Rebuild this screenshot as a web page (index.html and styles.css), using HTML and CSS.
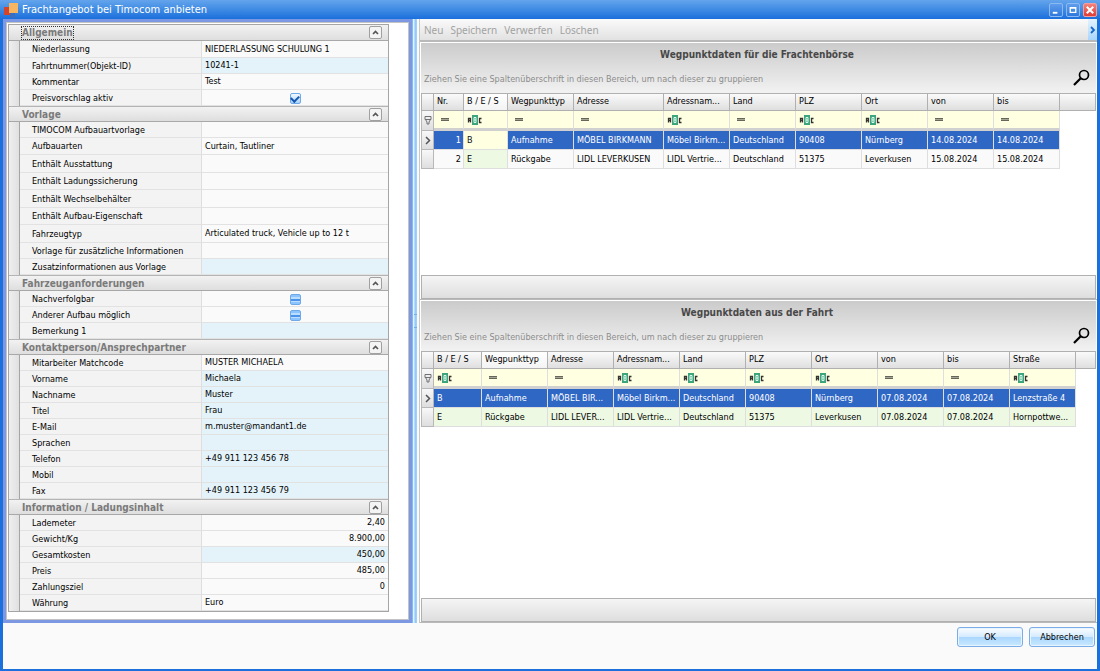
FILE: index.html
```html
<!DOCTYPE html>
<html lang="de">
<head>
<meta charset="utf-8">
<title>Frachtangebot bei Timocom anbieten</title>
<link rel="stylesheet" href="styles.css">
</head>
<body>
<svg class="sprite" aria-hidden="true">
  <symbol id="up" viewBox="0 0 7 5"><path d="M1 4 3.500 1.500 6 4" fill="none" stroke="#555" stroke-width="1.700"/></symbol>
  <symbol id="eq" viewBox="0 0 8 5"><path d="M0 2.500h8" stroke="#a5a594" stroke-width="3"/><path d="M0 1.500h8M0 3.500h8" stroke="#66665c" stroke-width="1"/></symbol>
  <symbol id="funnel" viewBox="0 0 8 9"><path d="M1 .500h6v3H1zM1.500 3.500 3 6v2h2V6l1.500-2.500" fill="none" stroke="#707070" stroke-width="1"/></symbol>
  <symbol id="arrow" viewBox="0 0 6 9"><path d="M1 1 4.500 4.500 1 8" fill="none" stroke="#555" stroke-width="1.500"/></symbol>
  <symbol id="lens" viewBox="0 0 17 17"><circle cx="11" cy="6" r="4.500" fill="none" stroke="#000" stroke-width="1.700"/><path d="M7.700 9.300 1 16" stroke="#000" stroke-width="2.200"/></symbol>
  <symbol id="abc" viewBox="0 0 15 10"><path d="M5 0h6v10H5z" fill="#3da57d"/><path d="M7 2.500h2v5H7zM7 5h2" fill="none" stroke="#dff7ec" stroke-width="1"/><path d="M1.500 7.500v-4h2v4M1.500 5.500h2" fill="none" stroke="#333" stroke-width="1.300"/><path d="M14.500 3.500h-2v4h2" fill="none" stroke="#333" stroke-width="1.300"/></symbol>
</svg>
<div class="window">
  <header class="titlebar">
    <svg class="app-icon" viewBox="0 0 16 16" aria-hidden="true"><path d="M1 5h6v8H1z" fill="#d2452c"/><path d="M7 11h5v5H7z" fill="#3a6fc0"/><path d="M6 1h9v10H6z" fill="#f5b561"/></svg>
    <h1 class="window-title">Frachtangebot bei Timocom anbieten</h1>
    <button class="win-btn" aria-label="Minimieren"><svg viewBox="0 0 13 13"><path d="M3 9.500h5" stroke="#fff" stroke-width="2"/></svg></button>
    <button class="win-btn" aria-label="Maximieren"><svg viewBox="0 0 13 13"><path d="M3.500 4h6v5h-6zM3 4.500h7" fill="none" stroke="#fff" stroke-width="1.400"/></svg></button>
    <button class="win-btn win-close" aria-label="Schließen"><svg viewBox="0 0 13 13"><path d="m3 3 7 7M10 3 3 10" stroke="#fff" stroke-width="2.200"/></svg></button>
  </header>
  <main class="content">
    <section class="left">
      <table class="props">
        <colgroup><col class="c-indent"><col class="c-label"><col></colgroup>
        <tbody>
          <tr class="cat"><th colspan="3"><div class="cat-bar"><span class="focus">Allgemein</span><button class="fold" aria-label="Allgemein einklappen"><svg><use href="#up"/></svg></button></div></th></tr>
          <tr class="h17"><td></td><th>Niederlassung</th><td>NIEDERLASSUNG SCHULUNG 1</td></tr>
          <tr><td></td><th>Fahrtnummer(Objekt-ID)</th><td class="ro">10241-1</td></tr>
          <tr><td></td><th>Kommentar</th><td>Test</td></tr>
          <tr><td></td><th><label for="pv">Preisvorschlag aktiv</label></th><td class="mid"><input type="checkbox" id="pv" class="check" checked></td></tr>
        </tbody>
        <tbody>
          <tr class="cat"><th colspan="3"><div class="cat-bar"><span>Vorlage</span><button class="fold" aria-label="Vorlage einklappen"><svg><use href="#up"/></svg></button></div></th></tr>
          <tr><td></td><th>TIMOCOM Aufbauartvorlage</th><td></td></tr>
          <tr class="h17"><td></td><th>Aufbauarten</th><td>Curtain, Tautliner</td></tr>
          <tr class="h18"><td></td><th>Enthält Ausstattung</th><td></td></tr>
          <tr class="h17"><td></td><th>Enthält Ladungssicherung</th><td></td></tr>
          <tr class="h18"><td></td><th>Enthält Wechselbehälter</th><td></td></tr>
          <tr class="h17"><td></td><th>Enthält Aufbau-Eigenschaft</th><td></td></tr>
          <tr class="h18"><td></td><th>Fahrzeugtyp</th><td>Articulated truck, Vehicle up to 12 t</td></tr>
          <tr><td></td><th>Vorlage für zusätzliche Informationen</th><td></td></tr>
          <tr><td></td><th>Zusatzinformationen aus Vorlage</th><td class="ro"></td></tr>
        </tbody>
        <tbody>
          <tr class="cat"><th colspan="3"><div class="cat-bar"><span>Fahrzeuganforderungen</span><button class="fold" aria-label="Fahrzeuganforderungen einklappen"><svg><use href="#up"/></svg></button></div></th></tr>
          <tr><td></td><th><label for="nv">Nachverfolgbar</label></th><td class="mid"><input type="checkbox" id="nv" class="check mixed"></td></tr>
          <tr><td></td><th><label for="aa">Anderer Aufbau möglich</label></th><td class="mid"><input type="checkbox" id="aa" class="check mixed"></td></tr>
          <tr><td></td><th>Bemerkung 1</th><td class="ro"></td></tr>
        </tbody>
        <tbody>
          <tr class="cat"><th colspan="3"><div class="cat-bar"><span>Kontaktperson/Ansprechpartner</span><button class="fold" aria-label="Kontaktperson einklappen"><svg><use href="#up"/></svg></button></div></th></tr>
          <tr><td></td><th>Mitarbeiter Matchcode</th><td>MUSTER MICHAELA</td></tr>
          <tr><td></td><th>Vorname</th><td class="ro">Michaela</td></tr>
          <tr><td></td><th>Nachname</th><td class="ro">Muster</td></tr>
          <tr><td></td><th>Titel</th><td class="ro">Frau</td></tr>
          <tr><td></td><th>E-Mail</th><td class="ro">m.muster@mandant1.de</td></tr>
          <tr><td></td><th>Sprachen</th><td class="ro"></td></tr>
          <tr><td></td><th>Telefon</th><td class="ro">+49 911 123 456 78</td></tr>
          <tr><td></td><th>Mobil</th><td class="ro"></td></tr>
          <tr><td></td><th>Fax</th><td class="ro">+49 911 123 456 79</td></tr>
        </tbody>
        <tbody>
          <tr class="cat"><th colspan="3"><div class="cat-bar"><span>Information / Ladungsinhalt</span><button class="fold" aria-label="Information einklappen"><svg><use href="#up"/></svg></button></div></th></tr>
          <tr><td></td><th>Lademeter</th><td class="num">2,40</td></tr>
          <tr><td></td><th>Gewicht/Kg</th><td class="num">8.900,00</td></tr>
          <tr><td></td><th>Gesamtkosten</th><td class="num ro">450,00</td></tr>
          <tr><td></td><th>Preis</th><td class="num">485,00</td></tr>
          <tr><td></td><th>Zahlungsziel</th><td class="num">0</td></tr>
          <tr><td></td><th>Währung</th><td>Euro</td></tr>
        </tbody>
      </table>
    </section>
    <div class="splitter"><span class="grip"></span></div>
    <section class="right">
      <nav class="toolbar">
        <button disabled>Neu</button><button disabled>Speichern</button><button disabled>Verwerfen</button><button disabled>Löschen</button>
        <button class="more" aria-label="Mehr"><svg viewBox="0 0 6 8"><path d="M1 1 4 4 1 7" fill="none" stroke="#1767c9" stroke-width="1.800"/></svg></button>
      </nav>
      <section class="panel panel-top">
        <div class="band">
          <h2>Wegpunktdaten für die Frachtenbörse</h2>
          <div class="group-row"><span>Ziehen Sie eine Spaltenüberschrift in diesen Bereich, um nach dieser zu gruppieren</span><button class="search" aria-label="Suchen"><svg><use href="#lens"/></svg></button></div>
        </div>
        <table class="grid">
          <colgroup><col class="w13"><col class="w30"><col class="w44"><col class="w66"><col class="w90"><col class="w66"><col class="w66"><col class="w66"><col class="w66"><col class="w66"><col class="w66"><col></colgroup>
          <thead>
            <tr><th></th><th>Nr.</th><th class="hot">B / E / S</th><th>Wegpunkttyp</th><th>Adresse</th><th>Adressnam...</th><th>Land</th><th>PLZ</th><th>Ort</th><th>von</th><th>bis</th><th></th></tr>
          </thead>
          <tbody>
            <tr class="filter"><td class="ind"><svg class="i-funnel"><use href="#funnel"/></svg></td><td><svg class="i-eq"><use href="#eq"/></svg></td><td><svg class="i-abc"><use href="#abc"/></svg></td><td><svg class="i-eq"><use href="#eq"/></svg></td><td><svg class="i-eq"><use href="#eq"/></svg></td><td><svg class="i-abc"><use href="#abc"/></svg></td><td><svg class="i-eq"><use href="#eq"/></svg></td><td><svg class="i-abc"><use href="#abc"/></svg></td><td><svg class="i-abc"><use href="#abc"/></svg></td><td><svg class="i-eq"><use href="#eq"/></svg></td><td><svg class="i-eq"><use href="#eq"/></svg></td><td class="rest"></td></tr>
            <tr class="sel"><td class="ind"><svg class="i-arrow"><use href="#arrow"/></svg></td><td class="num">1</td><td class="edit">B</td><td>Aufnahme</td><td>MÖBEL BIRKMANN</td><td>Möbel Birkm...</td><td>Deutschland</td><td>90408</td><td>Nürnberg</td><td>14.08.2024</td><td>14.08.2024</td><td class="rest"></td></tr>
            <tr><td class="ind"></td><td class="num">2</td><td class="green">E</td><td>Rückgabe</td><td>LIDL LEVERKUSEN</td><td>LIDL Vertrie...</td><td>Deutschland</td><td>51375</td><td>Leverkusen</td><td>15.08.2024</td><td>15.08.2024</td><td class="rest"></td></tr>
          </tbody>
        </table>
        <div class="summary"></div>
      </section>
      <section class="panel panel-bottom">
        <div class="band">
          <h2>Wegpunktdaten aus der Fahrt</h2>
          <div class="group-row"><span>Ziehen Sie eine Spaltenüberschrift in diesen Bereich, um nach dieser zu gruppieren</span><button class="search" aria-label="Suchen"><svg><use href="#lens"/></svg></button></div>
        </div>
        <table class="grid">
          <colgroup><col class="w13"><col class="w48"><col class="w66"><col class="w66"><col class="w66"><col class="w66"><col class="w66"><col class="w66"><col class="w66"><col class="w66"><col class="w66"><col></colgroup>
          <thead>
            <tr><th></th><th>B / E / S</th><th class="hot">Wegpunkttyp</th><th>Adresse</th><th>Adressnam...</th><th>Land</th><th>PLZ</th><th>Ort</th><th>von</th><th>bis</th><th>Straße</th><th></th></tr>
          </thead>
          <tbody>
            <tr class="filter"><td class="ind"><svg class="i-funnel"><use href="#funnel"/></svg></td><td><svg class="i-abc"><use href="#abc"/></svg></td><td><svg class="i-eq"><use href="#eq"/></svg></td><td><svg class="i-eq"><use href="#eq"/></svg></td><td><svg class="i-abc"><use href="#abc"/></svg></td><td><svg class="i-abc"><use href="#abc"/></svg></td><td><svg class="i-abc"><use href="#abc"/></svg></td><td><svg class="i-abc"><use href="#abc"/></svg></td><td><svg class="i-eq"><use href="#eq"/></svg></td><td><svg class="i-eq"><use href="#eq"/></svg></td><td><svg class="i-abc"><use href="#abc"/></svg></td><td class="rest"></td></tr>
            <tr class="sel"><td class="ind"><svg class="i-arrow"><use href="#arrow"/></svg></td><td>B</td><td>Aufnahme</td><td>MÖBEL BIR...</td><td>Möbel Birkm...</td><td>Deutschland</td><td>90408</td><td>Nürnberg</td><td>07.08.2024</td><td>07.08.2024</td><td>Lenzstraße 4</td><td class="rest"></td></tr>
            <tr class="green"><td class="ind"></td><td>E</td><td>Rückgabe</td><td>LIDL LEVER...</td><td>LIDL Vertrie...</td><td>Deutschland</td><td>51375</td><td>Leverkusen</td><td>07.08.2024</td><td>07.08.2024</td><td>Hornpottwe...</td><td class="rest"></td></tr>
          </tbody>
        </table>
        <div class="summary"></div>
      </section>
    </section>
  </main>
  <footer class="actions"><button class="btn">OK</button><button class="btn">Abbrechen</button></footer>
</div>
</body>
</html>
```
FILE: styles.css
```css
* { box-sizing: border-box; }
body {
  margin: 0;
  font-family: "DejaVu Sans Condensed", "DejaVu Sans", sans-serif;
  font-size: 9px;
  line-height: 14px;
  color: #000;
}
button { font: inherit; padding: 0; border: 0; background: none; }
h1, h2 { margin: 0; }
.sprite { display: none; }
svg { display: block; }

.window {
  display: flex;
  flex-direction: column;
  min-height: 100vh;
  border: solid #1b70dc;
  border-width: 0 3px 2px;
  background: #fafafa;
}
.titlebar {
  display: flex;
  align-items: center;
  gap: 3px;
  height: 19px;
  margin: 0 -3px;
  padding: 0 3px;
  background: linear-gradient(#64a4ec, #3f8be4 50%, #1b6fdc);
}
.app-icon { width: 16px; height: 16px; }
.window-title {
  flex: 1;
  font-size: 11px;
  font-weight: normal;
  color: #fff;
}
.win-btn {
  width: 14px;
  height: 14px;
  border: 1px solid #8db9f2;
  border-radius: 2px;
  background: linear-gradient(#5f9dec, #2f78dc);
}
.win-close { border-color: #f0a0a0; background: linear-gradient(#f4827a, #e03c36); }

.content { flex: 1; display: flex; background: #fff; }
.left {
  width: 409px;
  padding: 2px 20px 8px 2px;
  border: 3px solid #7d98e2;
  outline: 1px solid #c3c3c3;
  outline-offset: -4px;
}

.props {
  width: 100%;
  table-layout: fixed;
  border-collapse: separate;
  border-spacing: 0;
  border: 1px solid #a5a5a5;
}
.c-indent { width: 11px; }
.c-label { width: 182px; }
.props th, .props td { height: 16px; padding: 1px 0 0; line-height: 13px; font-weight: normal; text-align: left; white-space: nowrap; overflow: hidden; }
.props .h17 > * { height: 17px; }
.props .h18 > * { height: 18px; }
.props td { padding: 0 3px; background: #fafafa; border-bottom: 1px solid #e2e2e2; }
.props td:first-child { background: linear-gradient(90deg, #efefef, #e0e0e0); border-right: 1px solid #a5a5a5; border-bottom: 0; }
.props th { padding-left: 12px; background: #f3f3f3; border-right: 1px solid #dedede; border-bottom: 1px solid #e2e2e2; }
.props td.ro { background: #e4f3f9; }
.props td.num { text-align: right; }
.props td.mid { text-align: center; padding: 1px 0 0; }
.props .cat th { padding: 0; border: 0; }
.cat-bar {
  display: flex;
  align-items: center;
  justify-content: space-between;
  height: 16px;
  padding: 0 6px 0 13px;
  border-top: 1px solid #b4b4b4;
  border-bottom: 1px solid #a8a8a8;
  background: linear-gradient(#f2f2f2, #dedede);
  color: #7a7a7a;
  font-size: 10px;
  font-weight: bold;
}
tbody:first-of-type .cat-bar { border-top: 0; }
.focus { outline: 1px dotted #333; line-height: 12px; }
.fold {
  display: grid;
  place-items: center;
  width: 13px;
  height: 13px;
  border: 1px solid #a0a0a0;
  border-radius: 2px;
  background: #f4f4f4;
}
.fold svg { width: 7px; height: 5px; }
.check {
  appearance: none;
  display: block;
  width: 11px;
  height: 11px;
  margin: 0 auto;
  border: 1px solid #6fa9e8;
  border-radius: 2px;
  background: linear-gradient(#f4faff, #a8d4ff);
}
.check:checked::after {
  content: "";
  display: block;
  width: 6px;
  height: 4px;
  margin: 1px auto 0;
  border: solid #1558b0;
  border-width: 0 0 2px 2px;
  transform: rotate(-45deg);
}
.mixed { background: linear-gradient(#8cc4ff 25%, #b9deff 25% 40%, #4b93e8 40% 62%, #b9deff 62% 75%, #8cc4ff 75%); }

.splitter {
  display: flex;
  align-items: center;
  width: 7px;
  padding-left: 1px;
  border-left: 1px solid #7fbaf5;
  border-right: 2px solid #fafafa;
  background: linear-gradient(90deg, #e3f2ff 1px, #8fc6fb 2px, #a6d2ff);
}
.grip { width: 4px; height: 14px; border: 1px solid #6fb2f3; border-width: 1px 0; }

.right { flex: 1; min-width: 0; display: flex; flex-direction: column; border-left: 1px solid #c8c8c8; }
.toolbar {
  display: flex;
  align-items: center;
  gap: 7px;
  height: 23px;
  padding-left: 4px;
  border-bottom: 2px solid #b9b9b9;
  background: linear-gradient(#fafafa, #e2e2e2);
  font-family: "Noto Sans", sans-serif;
  font-size: 10px;
}
.toolbar button:disabled { color: #a2a2a2; }
.toolbar .more { align-self: stretch; display: grid; place-items: center; width: 9px; margin-left: auto; background: linear-gradient(#e4f3ff, #a9d5fd); }
.more svg { width: 6px; height: 8px; }
.panel { display: flex; flex-direction: column; padding: 1px 1px 0; border-bottom: 1px solid #b9b9b9; }
.panel-top { flex: 4; }
.panel-bottom { flex: 5; }
.band { height: 50px; padding: 5px 6px 0 3px; background: linear-gradient(#cbcbcb, #f2f2f2); }
.band h2 { font-size: 10px; line-height: 14px; text-align: center; color: #484848; }
.group-row { display: flex; align-items: center; justify-content: space-between; height: 31px; color: #8c8c8c; }
.group-row span { padding-top: 2px; }
.search svg { width: 17px; height: 17px; }

.grid { width: 100%; table-layout: fixed; border-collapse: separate; border-spacing: 0; }
.w13 { width: 13px; } .w30 { width: 30px; } .w44 { width: 44px; } .w48 { width: 48px; } .w66 { width: 66px; } .w90 { width: 90px; }
.grid th {
  height: 18px;
  padding: 0 0 2px 3px;
  border: solid #b0b0b0;
  border-width: 1px 1px 1px 0;
  background: linear-gradient(#fafafa, #dfdfdf);
  font-weight: normal;
  text-align: left;
  white-space: nowrap;
  overflow: hidden;
}
.grid th:first-child { border-left-width: 1px; }
.grid th.hot { background: linear-gradient(#fff, #f3f3f3); }
.grid td {
  height: 19px;
  padding: 0 0 0 3px;
  border: solid #dedede;
  border-width: 0 1px 1px 0;
  background: #fafafa;
  white-space: nowrap;
  overflow: hidden;
}
.grid .filter td { height: 20px; background: #ffffe1; border-bottom: 3px solid #d0d0d0; }
.grid .sel td { background: #2f67c5; color: #fff; }
.grid .sel td.edit { background: #ffffe1; color: #111; }
.grid .green td, .grid td.green { background: #edf9e3; }
.grid tbody td.rest { background: #fff; border: 0; }
.grid tbody td.ind { padding: 0; background: linear-gradient(#f8f8f8, #dedede); border: solid #b8b8b8; border-width: 0 1px 1px; }
.grid td.num { text-align: right; padding-right: 2px; }
.i-funnel { width: 8px; height: 9px; margin: 0 auto; }
.i-arrow { width: 6px; height: 9px; margin: 0 auto; }
.i-eq { width: 8px; height: 5px; margin-left: 4px; }
.i-abc { width: 15px; height: 10px; }
.summary { height: 24px; margin-top: auto; border: 1px solid #b0b0b0; background: linear-gradient(#f5f5f5, #dedede); }

.actions { display: flex; justify-content: flex-end; gap: 6px; height: 46px; padding: 4px 2px 0; }
.btn {
  width: 66px;
  height: 20px;
  border: 1px solid #7aace8;
  border-radius: 3px;
  background: linear-gradient(#fbfdff, #d3eaff 50%, #a9d6ff 50%, #c9e9ff);
  box-shadow: inset 0 0 0 1px #e8f5ff;
}
```
